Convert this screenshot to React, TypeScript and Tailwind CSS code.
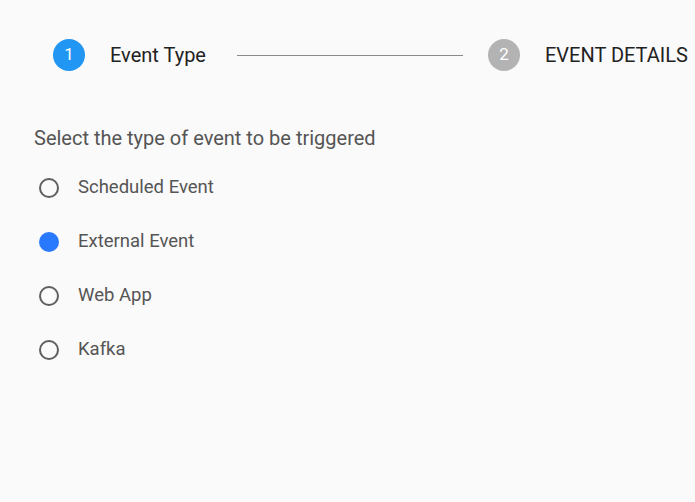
import { useState } from "react";

const options = ["Scheduled Event", "External Event", "Web App", "Kafka"];

function Radio({ checked }: { checked: boolean }) {
  if (checked) {
    return <span className="block w-5 h-5 rounded-full bg-[#2979ff]" />;
  }
  return <span className="block w-5 h-5 rounded-full border-2 border-[#5f5f5f]" />;
}

export default function App() {
  const [selected, setSelected] = useState("External Event");

  return (
    <div className="w-[695px] h-[502px] bg-[#fafafa] overflow-hidden font-['Roboto',sans-serif]">
      <div className="flex items-center pl-[53px] pt-[39px]">
        <div className="w-8 h-8 rounded-full bg-[#2196f3] text-white text-[17px] flex items-center justify-center">
          1
        </div>
        <span className="ml-[25px] text-[20px] text-[#222]">Event Type</span>
        <div className="ml-[31px] w-[226px] h-px bg-[#8a8a8a]" />
        <div className="ml-[25px] w-8 h-8 rounded-full bg-[#b3b3b3] text-white text-[17px] flex items-center justify-center">
          2
        </div>
        <span className="ml-[25px] text-[20px] text-[#222] whitespace-nowrap">EVENT DETAILS</span>
      </div>

      <div className="pl-[34px] pt-[55px]">
        <p className="text-[20px] text-[#555] leading-[24px]">Select the type of event to be triggered</p>
        <div className="mt-[11px] flex flex-col">
          {options.map((o) => (
            <label
              key={o}
              className="flex items-center h-[54px] cursor-pointer"
              onClick={() => setSelected(o)}
            >
              <span className="ml-[5px]">
                <Radio checked={selected === o} />
              </span>
              <span className="ml-[19px] text-[18.5px] text-[#555]">{o}</span>
            </label>
          ))}
        </div>
      </div>
    </div>
  );
}
